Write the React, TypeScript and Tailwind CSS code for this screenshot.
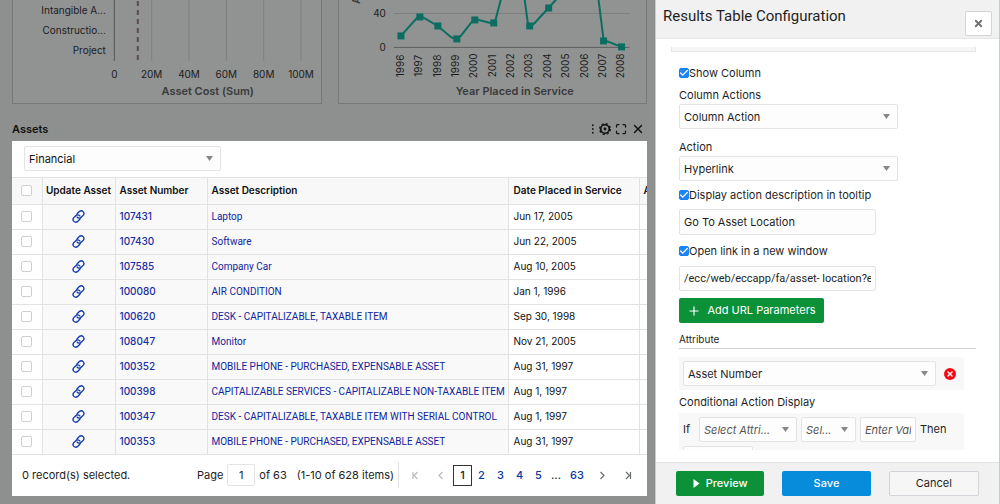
import { useState, type ReactNode } from "react";
import { Check, Maximize, Plus, X } from "lucide-react";

const categories = [
  { label: "Intangible A...", y: 14 },
  { label: "Constructio...", y: 34 },
  { label: "Project", y: 54 },
];

const costTicks = ["0", "20M", "40M", "60M", "80M", "100M"];

const points = [
  { x: 62, y: 36 },
  { x: 81, y: 17 },
  { x: 99, y: 26 },
  { x: 118, y: 39 },
  { x: 136, y: 20 },
  { x: 155, y: 23 },
  { x: 191, y: 26 },
  { x: 210, y: 8 },
  { x: 265, y: 41 },
  { x: 283, y: 47 },
];

const years = [1996, 1997, 1998, 1999, 2000, 2001, 2002, 2003, 2004, 2005, 2006, 2007, 2008];

const assets = [
  { number: "107431", description: "Laptop", date: "Jun 17, 2005" },
  { number: "107430", description: "Software", date: "Jun 22, 2005" },
  { number: "107585", description: "Company Car", date: "Aug 10, 2005" },
  { number: "100080", description: "AIR CONDITION", date: "Jan 1, 1996" },
  { number: "100620", description: "DESK - CAPITALIZABLE, TAXABLE ITEM", date: "Sep 30, 1998" },
  { number: "108047", description: "Monitor", date: "Nov 21, 2005" },
  { number: "100352", description: "MOBILE PHONE - PURCHASED, EXPENSABLE ASSET", date: "Aug 31, 1997" },
  { number: "100398", description: "CAPITALIZABLE SERVICES - CAPITALIZABLE NON-TAXABLE ITEM", date: "Aug 1, 1997" },
  { number: "100347", description: "DESK - CAPITALIZABLE, TAXABLE ITEM WITH SERIAL CONTROL", date: "Aug 1, 1997" },
  { number: "100353", description: "MOBILE PHONE - PURCHASED, EXPENSABLE ASSET", date: "Aug 31, 1997" },
];

function CostChart() {
  return (
    <svg viewBox="0 0 308 103" className="block w-full" fontSize="10" fill="#1c1c1c">
      {costTicks.map((tick, i) => (
        <g key={tick}>
          <line x1={101.5 + i * 37.4} x2={101.5 + i * 37.4} y1="0" y2="61" stroke={i === 0 ? "#555" : "#7d7f80"} />
          <text x={101.5 + i * 37.4} y="78" textAnchor="middle">{tick}</text>
        </g>
      ))}
      <line x1="125" x2="125" y1="1" y2="61" stroke="#5c4a50" strokeWidth="2" strokeDasharray="5 4" />
      {categories.map((c) => (
        <text key={c.label} x="93" y={c.y} textAnchor="end">{c.label}</text>
      ))}
      <text x="195" y="95" textAnchor="middle" fontSize="11" fontWeight="600" fill="#3a3a3a">Asset Cost (Sum)</text>
    </svg>
  );
}

function YearChart() {
  return (
    <svg viewBox="0 0 308 103" className="block w-full" fontSize="10" fill="#1c1c1c">
      <line x1="55" x2="291" y1="13.5" y2="13.5" stroke="#7d7f80" />
      <line x1="55" x2="291" y1="47.5" y2="47.5" stroke="#5e5e5e" />
      <text x="47" y="17" textAnchor="end">40</text>
      <text x="47" y="51" textAnchor="end">0</text>
      <text transform="translate(21 4) rotate(-90)" fontSize="11" fontWeight="600" fill="#3a3a3a">Asset Count</text>
      <path
        d="M62 36L78 18Q81 15 85 18L99 26L112 37Q118 41 122 36L133 22Q136 18 140 20L152 23Q156 24 157 19L162 0L172 -34L186 0L189 22Q191 28 196 23L207 11L217 0L240 -30L259 -12L260 0L265 40L283 47"
        fill="none"
        stroke="#0b6e60"
        strokeWidth="2"
      />
      {points.map((p) => (
        <rect key={p.x} x={p.x - 3.5} y={p.y - 3.5} width="7" height="7" fill="#0b6e60" />
      ))}
      {years.map((year, i) => (
        <text key={year} transform={`translate(${65 + i * 18.4} 66) rotate(-90)`} textAnchor="middle">{year}</text>
      ))}
      <text x="176" y="95" textAnchor="middle" fontSize="11" fontWeight="600" fill="#3a3a3a">Year Placed in Service</text>
    </svg>
  );
}

function DotsIcon() {
  return (
    <svg viewBox="0 0 4 12" className="h-3 w-1" fill="currentColor">
      <rect x="1" y="1.5" width="1.6" height="1.6" />
      <rect x="1" y="5.2" width="1.6" height="1.6" />
      <rect x="1" y="8.9" width="1.6" height="1.6" />
    </svg>
  );
}

function GearIcon() {
  return (
    <svg viewBox="0 0 24 24" className="size-3" fill="none" stroke="currentColor">
      <circle cx="12" cy="12" r="8.5" strokeWidth="3.4" />
      <circle cx="12" cy="12" r="10.8" strokeWidth="2.4" strokeDasharray="4.4 4.08" />
      <circle cx="12" cy="12" r="2.8" fill="currentColor" stroke="none" />
    </svg>
  );
}

type SelectProps = {
  label: string;
  value: string;
  className: string;
  placeholder?: boolean;
};

function Select({ label, value, className, placeholder }: SelectProps) {
  return (
    <div className={`relative ${className}`}>
      <select
        aria-label={label}
        className={`h-[25px] w-full appearance-none truncate rounded-xs border border-[#e3e3e3] bg-[#fdfdfd] pt-px pr-5 pl-1 outline-none ${placeholder ? "italic text-[#555]" : ""}`}
      >
        <option>{value}</option>
      </select>
      <svg viewBox="0 0 7 5" className="pointer-events-none absolute top-[10px] right-2 h-[5px] w-[7px]" fill="#858789">
        <path d="M0 0H7L3.5 5Z" />
      </svg>
    </div>
  );
}

function CheckField({ children }: { children: ReactNode }) {
  const [checked, setChecked] = useState(true);

  return (
    <label className="flex h-4 items-center">
      <span className="relative size-[10px] shrink-0">
        <input
          type="checkbox"
          checked={checked}
          onChange={() => setChecked(!checked)}
          className="block size-[10px] appearance-none rounded-xs border border-[#1680f0] checked:bg-[#1b86f5]"
        />
        {checked && <Check className="pointer-events-none absolute inset-0 size-[10px] text-white" strokeWidth={3} />}
      </span>
      {children}
    </label>
  );
}

function RowCheckbox({ label }: { label: string }) {
  return (
    <input
      type="checkbox"
      aria-label={label}
      className="mx-auto block size-[11px] appearance-none rounded-xs border border-[#cfcfd3] bg-white checked:bg-[#1b86f5]"
    />
  );
}

function AssetsTable() {
  return (
    <table className="w-full table-fixed border-collapse text-[10px] whitespace-nowrap">
      <colgroup>
        <col className="w-[30px]" />
        <col className="w-[73px]" />
        <col className="w-[92px]" />
        <col />
        <col className="w-[131px]" />
        <col className="w-2" />
      </colgroup>
      <thead>
        <tr className="h-[27px] border-y border-[#e2e2e4] bg-[#f8f8f8] text-left">
          <th className="border-r border-[#e2e2e4]"><RowCheckbox label="Select all" /></th>
          <th className="border-r border-[#e2e2e4] text-center font-semibold">Update Asset</th>
          <th className="border-r border-[#e2e2e4] pl-1 font-semibold">Asset Number</th>
          <th className="border-r border-[#e2e2e4] pl-1 font-semibold">Asset Description</th>
          <th className="border-r border-[#e2e2e4] pl-[5px] font-semibold">Date Placed in Service</th>
          <th className="overflow-hidden pl-1 font-semibold">A</th>
        </tr>
      </thead>
      <tbody>
        {assets.map((asset) => (
          <tr key={asset.number} className="h-[25px] border-b border-[#e2e2e4]">
            <td className="border-r border-[#e2e2e4]"><RowCheckbox label={`Select ${asset.number}`} /></td>
            <td className="border-r border-[#e2e2e4] bg-[#f9f9f9]">
              <a href="#" aria-label={`Update ${asset.number}`} className="flex justify-center text-[#1038a8]">
                <ChainIcon />
              </a>
            </td>
            <td className="border-r border-[#e2e2e4] bg-[#f9f9f9] pl-1">
              <a href="#" className="font-medium text-[#1a2fa0]">{asset.number}</a>
            </td>
            <td className="border-r border-[#e2e2e4] bg-[#f9f9f9] pl-1">
              <a href="#" className="font-['Roboto',sans-serif] text-[#10259c]">{asset.description}</a>
            </td>
            <td className="border-r border-[#e2e2e4] pl-[5px]">{asset.date}</td>
            <td />
          </tr>
        ))}
      </tbody>
    </table>
  );
}

function ChainIcon() {
  return (
    <svg viewBox="0 0 24 24" className="size-[13px]" fill="none" stroke="currentColor" strokeWidth="2.5" strokeLinecap="round">
      <path d="M9.5 13a5 5 0 0 0 7.5.5l4-4a5 5 0 0 0-7-7l-4 4a5 5 0 0 0-1 1.4" />
      <path d="M14.5 11a5 5 0 0 0-7.5-.5l-4 4a5 5 0 0 0 7 7l4-4a5 5 0 0 0 1-1.4" />
    </svg>
  );
}

function Pagination() {
  return (
    <div className="flex h-[41px] items-center pr-[15px] pl-[10px] text-[11px] text-[#222]">
      <span className="flex-1">0 record(s) selected.</span>
      <label htmlFor="page">Page</label>
      <input id="page" defaultValue="1" className="mx-1 h-[22px] w-7 rounded-xs border border-[#e3e3e3] text-center outline-none" />
      <span>of 63</span>
      <span className="ml-[10px]">(1-10 of 628 items)</span>
      <nav className="ml-1 flex h-[26px] items-center border-l border-[#e3e3e3] pl-3 font-medium text-[#0a36a8]">
        <button aria-label="First page" className="text-[#b8babd]"><EdgeIcon /></button>
        <button aria-label="Previous page" className="ml-4 text-[#b8babd]"><ArrowIcon /></button>
        <a href="#" aria-current="page" className="ml-2 flex h-[21px] w-[19px] items-center justify-center border border-[#333] text-[#222]">1</a>
        <a href="#" className="w-[19px] text-center">2</a>
        <a href="#" className="w-[19px] text-center">3</a>
        <a href="#" className="w-[19px] text-center">4</a>
        <a href="#" className="w-[19px] text-center">5</a>
        <span className="w-4 text-center text-[#222]">...</span>
        <a href="#" className="w-[26px] text-center">63</a>
        <button aria-label="Next page" className="ml-2 rotate-180 text-[#696c70]"><ArrowIcon /></button>
        <button aria-label="Last page" className="ml-4 text-[#696c70]"><LastIcon /></button>
      </nav>
    </div>
  );
}

function ArrowIcon() {
  return (
    <svg viewBox="0 0 9 9" className="size-[9px]" fill="none" stroke="currentColor" strokeWidth="1.2">
      <path d="M6.5 1L3 4.5L6.5 8" />
    </svg>
  );
}

function EdgeIcon() {
  return (
    <svg viewBox="0 0 9 9" className="size-[9px]" fill="none" stroke="currentColor" strokeWidth="1.2">
      <path d="M2 1V8M6.5 1L3 4.5L6.5 8" />
    </svg>
  );
}

function LastIcon() {
  return (
    <svg viewBox="0 0 9 9" className="size-[9px]" fill="none" stroke="currentColor" strokeWidth="1.2">
      <path d="M7.5 1V8M3 1L6.5 4.5L3 8" />
    </svg>
  );
}

function ConfigPanel() {
  return (
    <aside className="flex h-full w-[345px] shrink-0 flex-col border-x border-[#c9cbcb] bg-white text-[11px] text-[#1f1f1f]">
      <header className="flex h-[39px] shrink-0 justify-between border-b border-[#e6e6e6] bg-[#f1f1f1] pr-[7px] pl-[7px]">
        <h1 className="pt-1 font-['Roboto',sans-serif] text-[15px] leading-6">Results Table Configuration</h1>
        <button aria-label="Close" className="mt-[11px] flex h-[25px] w-[27px] items-center justify-center rounded-xs border border-[#d3d3da] bg-white text-[#6c6f72]">
          <X className="size-[11px]" strokeWidth={4} />
        </button>
      </header>

      <div className="min-h-0 flex-1 overflow-hidden pr-[23px] pl-[15px]">
        <div className="mt-2 h-[5px] border border-t-0 border-[#e6e6e6] bg-[#f5f5f5]" />
        <div className="flex flex-col items-start pt-[13px] pl-2">
          <CheckField>Show Column</CheckField>
          <span className="mt-[6px] leading-4">Column Actions</span>
          <Select label="Column Actions" value="Column Action" className="mt-px w-[219px]" />
          <span className="mt-[10px] leading-4">Action</span>
          <Select label="Action" value="Hyperlink" className="mt-px w-[219px]" />
          <div className="mt-[6px]"><CheckField>Display action description in tooltip</CheckField></div>
          <input aria-label="Tooltip text" defaultValue="Go To Asset Location" className="mt-[6px] h-[26px] w-[197px] rounded-xs border border-[#e3e3e3] bg-[#fdfdfd] px-1 outline-none" />
          <div className="mt-2"><CheckField>Open link in a new window</CheckField></div>
          <input aria-label="URL" defaultValue="/ecc/web/eccapp/fa/asset- location?entity" className="mt-[7px] h-[25px] w-[197px] rounded-xs border border-[#e3e3e3] bg-[#fdfdfd] px-1 font-['Roboto',sans-serif] outline-none" />
          <button className="mt-[7px] flex h-[25px] w-[145px] items-center justify-center gap-[6px] rounded-xs bg-[#0c9139] text-white">
            <Plus className="size-[14px]" />
            Add URL Parameters
          </button>
          <h2 className="mt-2 w-full border-b border-[#cfcfcf] text-[10px] leading-[17px]">Attribute</h2>
          <div className="mt-2 flex w-[285px] items-center gap-2 bg-[#f8f8f8] p-1">
            <Select label="Attribute" value="Asset Number" className="w-[253px]" />
            <button aria-label="Remove attribute" className="flex size-3 items-center justify-center rounded-full bg-[#f50a14] text-white">
              <X className="size-2" strokeWidth={4} />
            </button>
          </div>
          <span className="mt-1 leading-4">Conditional Action Display</span>
          <div className="mt-[3px] flex w-[285px] flex-wrap items-center gap-1 bg-[#f8f8f8] p-1">
            <span className="w-3">If</span>
            <Select label="Condition attribute" value="Select Attri..." className="w-[98px]" placeholder />
            <Select label="Operator" value="Sel..." className="w-[55px]" placeholder />
            <input aria-label="Condition value" placeholder="Enter Value" className="h-[25px] w-14 rounded-xs border border-[#e3e3e3] bg-[#fdfdfd] px-1 italic outline-none placeholder:text-[#555]" />
            <span>Then</span>
            <Select label="Result" value="" className="w-[70px]" />
          </div>
        </div>
      </div>

      <footer className="mt-3 flex h-[42px] shrink-0 items-center gap-[18px] border-t border-[#e2e2e2] bg-[#f1f1f1] pr-5 pl-5">
        <button className="flex h-[25px] flex-1 items-center justify-center gap-[6px] rounded-xs bg-[#0c9139] font-medium text-white">
          <svg viewBox="0 0 7 9" className="h-[9px] w-[7px]" fill="currentColor">
            <path d="M0.5 0L6.5 4.5L0.5 9Z" />
          </svg>
          Preview
        </button>
        <button className="h-[25px] flex-1 rounded-xs bg-[#068cda] font-medium text-white">Save</button>
        <button className="h-[25px] flex-1 rounded-xs border border-[#d3d3da] bg-[#f6f6f6]">Cancel</button>
      </footer>
    </aside>
  );
}

export default function App() {
  return (
    <div className="flex h-screen overflow-hidden bg-[#8e908f] font-['Inter',sans-serif] text-[#111]">
      <main className="min-w-0 flex-1 pr-2 pl-3">
        <div className="grid grid-cols-2 gap-4">
          <div className="border border-t-0 border-[#777979] bg-[#919393]"><CostChart /></div>
          <div className="border border-t-0 border-[#777979] bg-[#919393]"><YearChart /></div>
        </div>

        <section>
          <div className="flex h-[37px] items-end justify-between pb-1">
            <h2 className="text-[11px] leading-4 font-semibold">Assets</h2>
            <div className="flex h-4 items-center gap-1 pr-0.5">
              <button aria-label="More"><DotsIcon /></button>
              <button aria-label="Settings"><GearIcon /></button>
              <button aria-label="Maximize"><Maximize className="size-3" strokeWidth={2.5} /></button>
              <button aria-label="Close"><X className="size-[14px]" strokeWidth={2.5} /></button>
            </div>
          </div>
          <div className="overflow-hidden bg-white">
            <div className="flex h-9 items-center pl-3 text-[11px]">
              <Select label="View" value="Financial" className="w-[197px]" />
            </div>
            <AssetsTable />
            <Pagination />
          </div>
        </section>
      </main>
      <ConfigPanel />
    </div>
  );
}
